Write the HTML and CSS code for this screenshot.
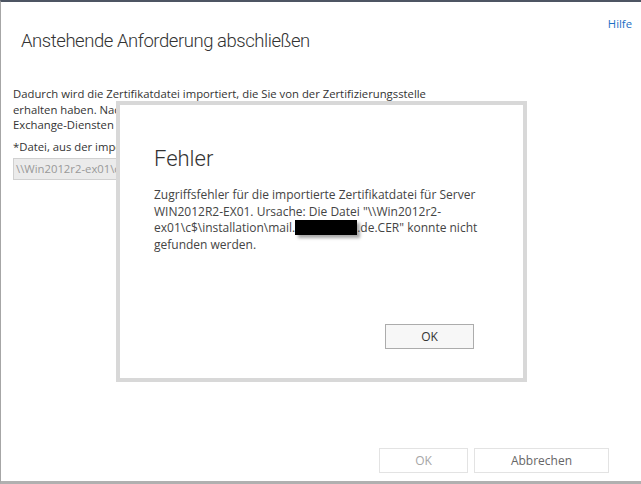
FILE: index.html
```html
<!DOCTYPE html>
<html lang="de">
<head>
<meta charset="utf-8">
<title>Anstehende Anforderung abschließen</title>
<link rel="stylesheet" href="styles.css">
</head>
<body>
<div class="window">
  <div class="header">
    <h1 class="title">Anstehende Anforderung abschließen</h1>
    <a class="help" href="#">Hilfe</a>
  </div>
  <div class="content">
    <p class="intro">Dadurch wird die Zertifikatdatei importiert, die Sie von der Zertifizierungsstelle<br>erhalten haben. Nachdem die Datei importiert wurde, weisen Sie das Zertifikat den<br>Exchange-Diensten zu.</p>
    <label class="field-label">*Datei, aus der importiert werden soll (Beispiel: \\server\ordner\datei.cer):</label>
    <div class="input">\\Win2012r2-ex01\c$\installation\mail.example.de.CER</div>
  </div>
  <div class="footer">
    <button class="btn btn-ok" disabled>OK</button>
    <button class="btn btn-cancel">Abbrechen</button>
  </div>

  <div class="modal">
    <h2 class="modal-title">Fehler</h2>
    <p class="modal-text">Zugriffsfehler für die importierte Zertifikatdatei für Server WIN2012R2-EX01. Ursache: Die Datei "\\Win2012r2-ex01\c$\installation\mail.<span class="redact"></span>.de.CER" konnte nicht gefunden werden.</p>
    <div class="modal-actions">
      <button class="btn modal-ok">OK</button>
    </div>
  </div>
</div>
</body>
</html>
```

FILE: styles.css
```css
* { box-sizing: border-box; }
html, body { margin: 0; padding: 0; background: #fff; }
body {
  font-family: "Segoe UI", "Open Sans", "Noto Sans", sans-serif;
  font-size: 11.3px;
  color: #333;
}
.window {
  position: relative;
  width: 641px;
  height: 484px;
  border-top: 2px solid #4d5563;
  border-left: 1px solid #a6a6a6;
  border-bottom: 3px solid #b0b0b0;
  display: flex;
  flex-direction: column;
  overflow: hidden;
}
.header {
  display: flex;
  justify-content: space-between;
  align-items: flex-start;
  padding: 14px 9px 0 20px;
}
.title {
  margin: 12px 0 0 0;
  font-family: "Segoe UI Light", Roboto, "Open Sans", sans-serif;
  font-weight: 300;
  font-size: 18.5px;
  letter-spacing: -0.45px;
  line-height: 26px;
  color: #333;
}
.help {
  font-size: 11.3px;
  color: #1e6fc5;
  text-decoration: none;
  line-height: 16px;
}
.content {
  padding: 32px 12px 0 12px;
  flex: 1;
}
.intro {
  margin: 0;
  line-height: 15.5px;
  white-space: nowrap;
}
.field-label {
  display: block;
  margin-top: 6px;
  white-space: nowrap;
  line-height: 16px;
  color: #333;
}
.input {
  margin-top: 3px;
  width: 300px;
  height: 22px;
  background: #ebebeb;
  border: 1px solid #d0d0d0;
  color: #999;
  padding: 2px 2px;
  line-height: 16px;
  white-space: nowrap;
  overflow: hidden;
}
.footer {
  display: flex;
  justify-content: flex-end;
  gap: 6px;
  padding: 0 32px 8px 0;
}
.btn {
  font-family: inherit;
  font-size: 12px;
  height: 25px;
  background: #fff;
  border: 1px solid #e3e3e3;
  padding: 0;
}
.btn-ok { width: 89px; color: #a6a6a6; }
.btn-cancel { width: 135px; color: #666; }

.modal {
  position: absolute;
  left: 115px;
  top: 99px;
  width: 411px;
  height: 281px;
  background: #fff;
  border: 4px solid #d8d8d8;
  padding: 40px 34px 0 34px;
  display: flex;
  flex-direction: column;
}
.modal-title {
  margin: 0;
  font-family: "Segoe UI Light", Roboto, "Open Sans", sans-serif;
  font-weight: 300;
  font-size: 22px;
  line-height: 28px;
  color: #333;
}
.modal-text {
  margin: 14px 0 0 0;
  font-size: 12px;
  line-height: 16.7px;
  color: #444;
}
.redact {
  display: inline-block;
  width: 62px;
  height: 15px;
  background: #000;
  vertical-align: -3px;
  box-shadow: 3px 3px 3px rgba(0,0,0,0.35);
}
.modal-actions {
  margin-top: auto;
  display: flex;
  justify-content: flex-end;
  padding: 0 15px 29px 0;
}
.modal-ok {
  width: 89px;
  height: 25px;
  background: #f7f7f7;
  border: 1px solid #acacac;
  color: #333;
}
```
